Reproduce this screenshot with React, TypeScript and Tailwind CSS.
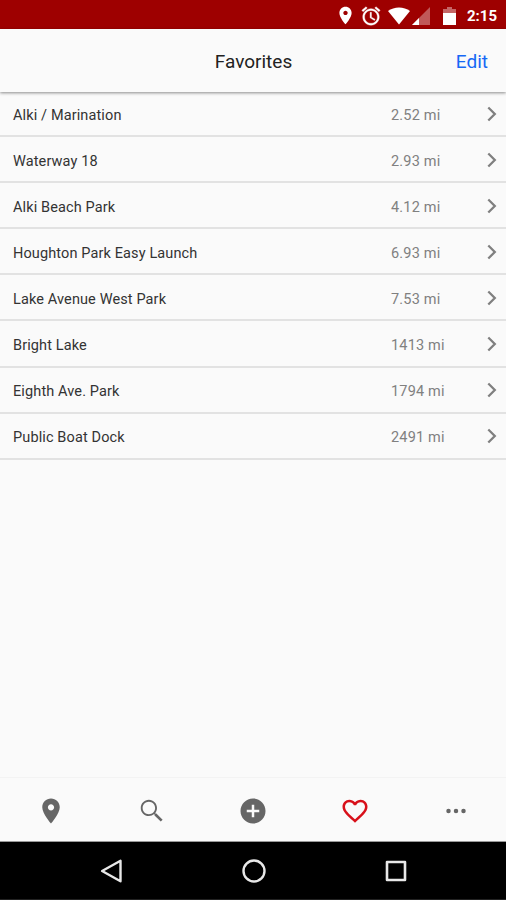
import React from 'react';

interface Favorite {
  id: number;
  name: string;
  distance: string;
}

const PIN_PATH =
  'M12 2C8.13 2 5 5.13 5 9c0 5.25 7 13 7 13s7-7.75 7-13c0-3.87-3.13-7-7-7zm0 9.5c-1.38 0-2.5-1.12-2.5-2.5s1.12-2.5 2.5-2.5 2.5 1.12 2.5 2.5-1.12 2.5-2.5 2.5z';

const favorites: Favorite[] = [
  { id: 1, name: 'Alki / Marination', distance: '2.52 mi' },
  { id: 2, name: 'Waterway 18', distance: '2.93 mi' },
  { id: 3, name: 'Alki Beach Park', distance: '4.12 mi' },
  { id: 4, name: 'Houghton Park Easy Launch', distance: '6.93 mi' },
  { id: 5, name: 'Lake Avenue West Park', distance: '7.53 mi' },
  { id: 6, name: 'Bright Lake', distance: '1413 mi' },
  { id: 7, name: 'Eighth Ave. Park', distance: '1794 mi' },
  { id: 8, name: 'Public Boat Dock', distance: '2491 mi' },
];

// Material icons used by the tab bar
const tabs = [
  { name: 'nearby', path: PIN_PATH },
  {
    name: 'search',
    path: 'M15.5 14h-.79l-.28-.27C15.41 12.59 16 11.11 16 9.5 16 5.91 13.09 3 9.5 3S3 5.91 3 9.5 5.91 16 9.5 16c1.61 0 3.09-.59 4.23-1.57l.27.28v.79l5 4.99L20.49 19l-4.99-5zm-6 .5c-2.76 0-5-2.24-5-5s2.24-5 5-5 5 2.24 5 5-2.24 5-5 5z',
  },
  {
    name: 'add',
    path: 'M12 2C6.48 2 2 6.48 2 12s4.48 10 10 10 10-4.48 10-10S17.52 2 12 2zm5 11h-4v4h-2v-4H7v-2h4V7h2v4h4v2z',
  },
  {
    name: 'favorites',
    path: 'M16.5 3c-1.74 0-3.41.81-4.5 2.09C10.91 3.81 9.24 3 7.5 3 4.42 3 2 5.42 2 8.5c0 3.78 3.4 6.86 8.55 11.54L12 21.35l1.45-1.32C18.6 15.36 22 12.28 22 8.5 22 5.42 19.58 3 16.5 3zm-4.4 15.55l-.1.1-.1-.1C7.14 14.24 4 11.39 4 8.5 4 6.5 5.5 5 7.5 5c1.54 0 3.04.99 3.57 2.36h1.87C13.46 5.99 14.96 5 16.5 5c2 0 3.5 1.5 3.5 3.5 0 2.89-3.14 5.74-7.9 10.05z',
  },
  {
    name: 'more',
    path: 'M6 10.2a1.8 1.8 0 1 0 0 3.6 1.8 1.8 0 0 0 0-3.6zm6 0a1.8 1.8 0 1 0 0 3.6 1.8 1.8 0 0 0 0-3.6zm6 0a1.8 1.8 0 1 0 0 3.6 1.8 1.8 0 0 0 0-3.6z',
  },
];

const StatusBar: React.FC = () => (
  <div className="flex h-[29px] shrink-0 items-center justify-end bg-[#9e0000] pr-[9px] pt-[2px] text-white">
    <svg className="h-[21px] w-[21px]" viewBox="0 0 24 24" fill="currentColor">
      <path d={PIN_PATH} />
    </svg>
    <svg className="ml-[4px] h-[22px] w-[22px]" viewBox="0 0 24 24" fill="currentColor" stroke="currentColor" strokeWidth="0.4">
      <path d="M22 5.72l-4.6-3.86-1.29 1.53 4.6 3.86L22 5.72zM7.88 3.39L6.6 1.86 2 5.71l1.29 1.53 4.59-3.85zM12.5 8H11v6l4.75 2.85.75-1.23-4-2.37V8zM12 4c-4.97 0-9 4.03-9 9s4.02 9 9 9c4.97 0 9-4.03 9-9s-4.03-9-9-9zm0 16c-3.87 0-7-3.13-7-7s3.13-7 7-7 7 3.13 7 7-3.13 7-7 7z" />
    </svg>
    <svg className="ml-[6px] h-[18px] w-[22px]" viewBox="0 0 22 18" fill="currentColor">
      <path d="M11 17.5L0 4C3 1.700 7 .5 11 .5S19 1.700 22 4z" />
    </svg>
    <svg className="ml-[2px] h-[18px] w-[18px]" viewBox="0 0 18 18" fill="currentColor">
      <path d="M0 18L18 0v18z" opacity=".35" />
      <path d="M0 18L7 11v7z" />
    </svg>
    <svg className="ml-[13px] h-[18px] w-[13px]" viewBox="0 0 13 18" fill="currentColor">
      <path d="M0 2h4V0h5v2h4v4H0z" opacity=".4" />
      <path d="M0 6h13v12H0z" />
    </svg>
    <span className="ml-[11px] pt-[2px] text-[15px] leading-none font-bold">2:15</span>
  </div>
);

const FavoriteRow: React.FC<{ favorite: Favorite }> = ({ favorite }) => (
  <li className="flex h-[46.1px] items-center border-b-2 border-[#e2e2e2] pl-[13px] pr-[9px] text-[14.5px]">
    <span className="flex-1 pt-[5px] tracking-[0.12px] text-[#333]">{favorite.name}</span>
    <span className="w-[96px] pt-[5px] tracking-[0.18px] text-[#808080]">{favorite.distance}</span>
    <svg className="mt-px h-[16px] w-[10px]" viewBox="0 0 10 16" fill="none" stroke="#808080" strokeWidth="2.3">
      <path d="M1.300 1.500L7.800 8l-6.500 6.500" />
    </svg>
  </li>
);

const App: React.FC = () => {
  const activeTab = 'favorites';

  return (
    <div className="flex h-[900px] w-[506px] flex-col overflow-hidden bg-[#fafafa] font-[Roboto,sans-serif]">
      <StatusBar />
      <header className="relative grid h-[63px] shrink-0 grid-cols-3 items-center bg-[#fafafa] pt-[4px] shadow-[0_1px_3px_rgba(0,0,0,0.45)]">
        <h1 className="col-start-2 pl-[1px] text-center text-[19px] text-[#222]">Favorites</h1>
        <button className="pr-[18px] text-right text-[19px] text-[#1668f5]">Edit</button>
      </header>
      <ul className="-mt-[1px] flex-1">
        {favorites.map((favorite) => (
          <FavoriteRow key={favorite.id} favorite={favorite} />
        ))}
      </ul>
      <nav className="-mr-px grid h-[65px] shrink-0 grid-cols-5 items-center border-t border-b border-t-[#f3f3f3] border-b-[#999] pt-[2px]">
        {tabs.map((tab) => (
          <button key={tab.name} className="flex justify-center">
            <svg
              className={`h-[30px] w-[30px] ${tab.name === activeTab ? 'text-[#d8101a]' : 'text-[#666]'}`}
              viewBox="0 0 24 24"
              fill="currentColor"
            >
              <path d={tab.path} />
            </svg>
          </button>
        ))}
      </nav>
      {/* Android system buttons */}
      <div className="flex h-[58px] shrink-0 items-center justify-center gap-[118px] border-b border-[#222] bg-black pl-[2px]">
        <svg className="h-[24px] w-[24px]" viewBox="0 0 24 24" fill="none" stroke="#e8e8e8" strokeWidth="2.4" strokeLinejoin="round">
          <path d="M20.500 1.800v20.400L2.100 12z" />
        </svg>
        <svg className="h-[24px] w-[24px]" viewBox="0 0 24 24" fill="none" stroke="#e8e8e8" strokeWidth="2.4">
          <circle cx="12" cy="12" r="10.500" />
        </svg>
        <svg className="h-[24px] w-[24px]" viewBox="0 0 24 24" fill="none" stroke="#e8e8e8" strokeWidth="2.6" strokeLinejoin="round">
          <path d="M3 3h18v18h-18z" />
        </svg>
      </div>
    </div>
  );
};

export default App;
